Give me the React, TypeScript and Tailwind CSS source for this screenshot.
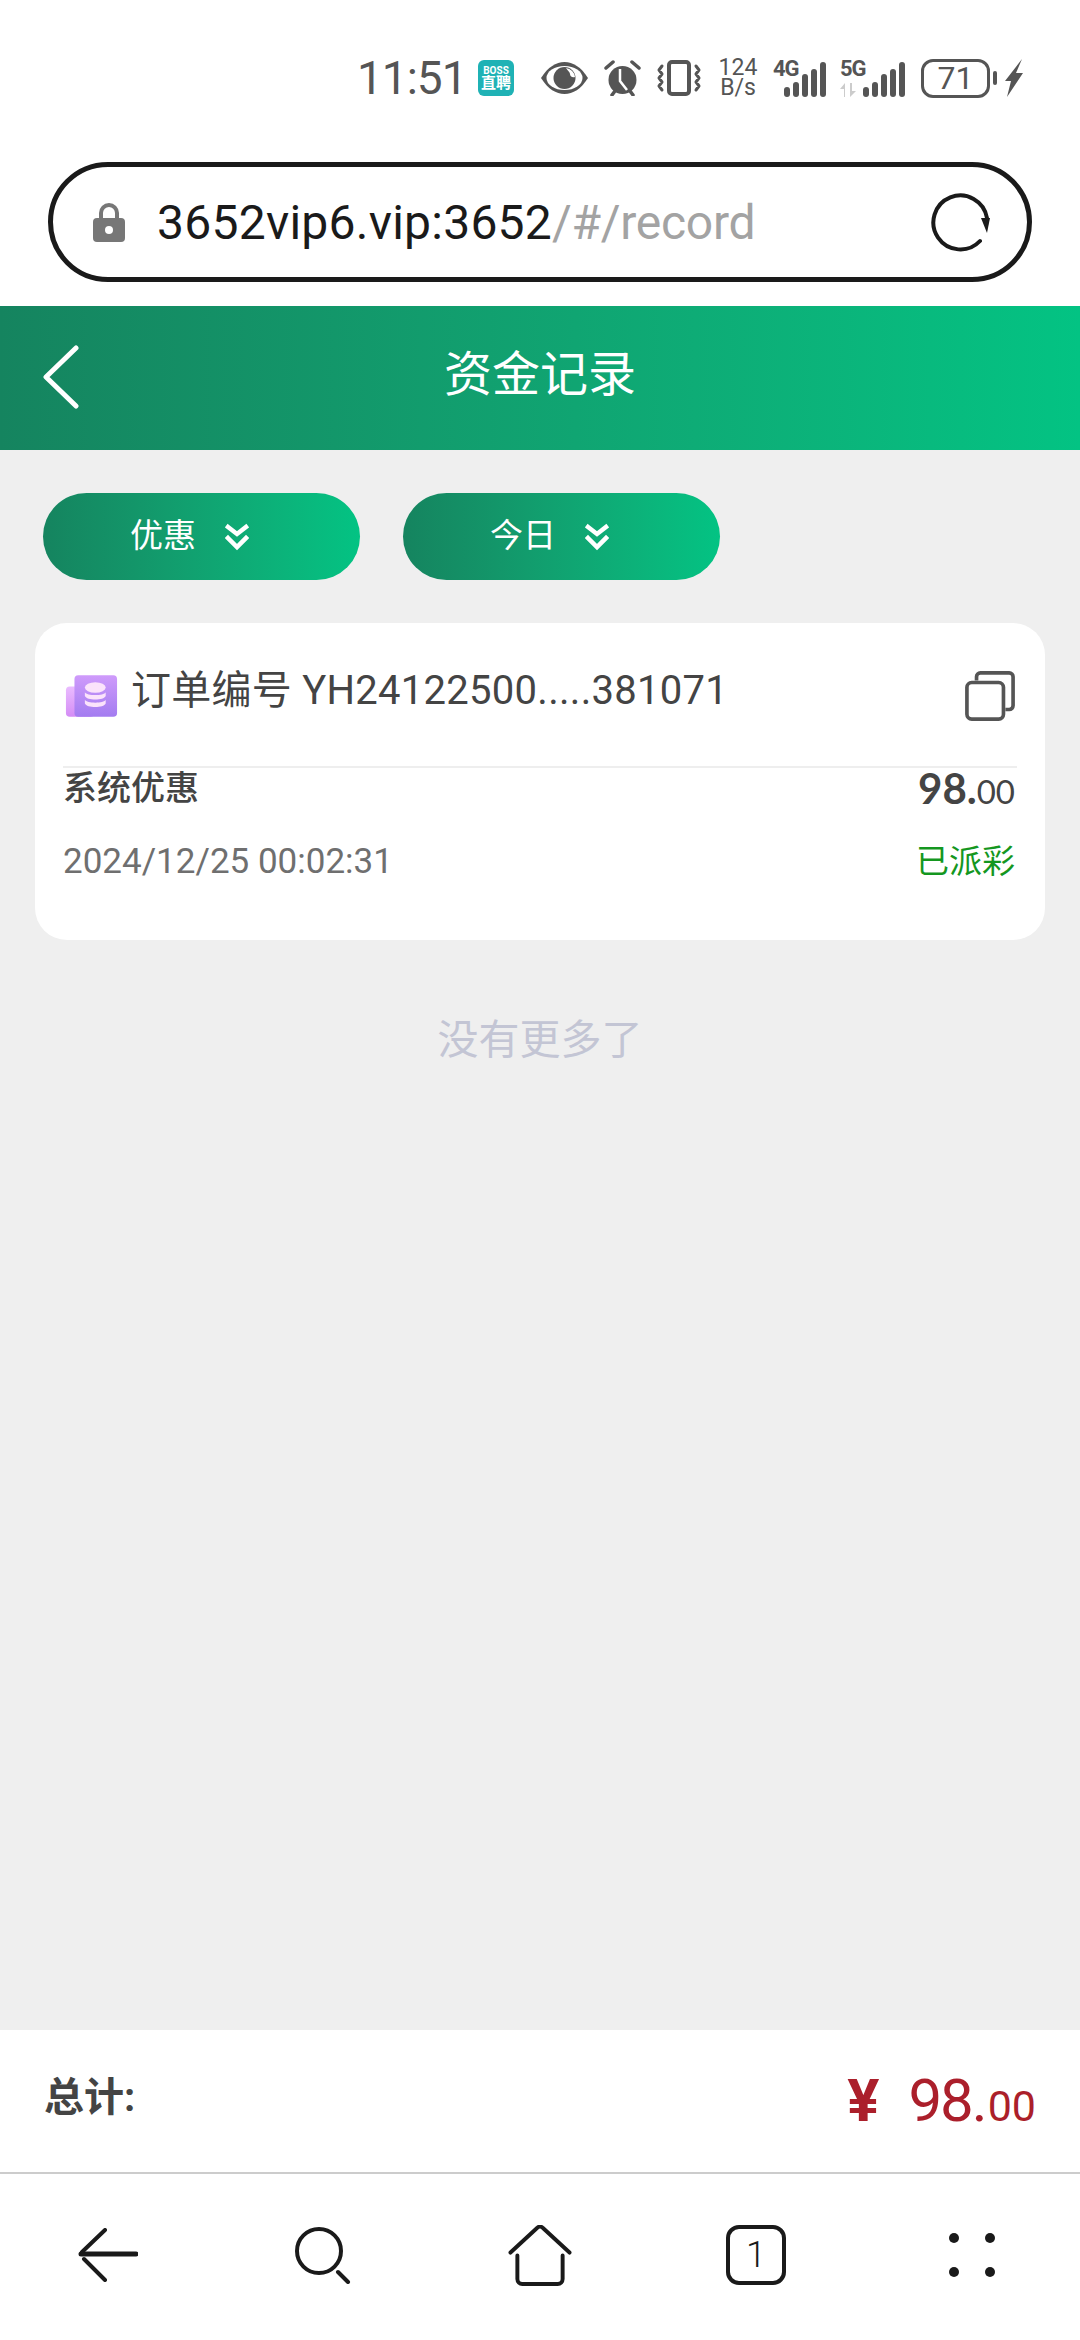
import React from 'react';

const cjk = "font-['Roboto','Noto_Sans_CJK_SC',sans-serif]";

function DoubleChevron() {
  return (
    <svg width="24" height="28" viewBox="0 0 24 28" fill="none" stroke="#fff" strokeWidth="4.500" strokeLinecap="square">
      <path d="M3 4l9 7 9-7" />
      <path d="M3 15l9 9 9-9" />
    </svg>
  );
}

function FilterPill({ label }: { label: string }) {
  return (
    <div className="w-[317px] h-[87px] rounded-full bg-gradient-to-r from-[#15845f] to-[#03c383] flex items-center pl-[87px] gap-[29px] text-white text-[33px]">
      <span className="leading-none -mt-[2px]">{label}</span>
      <DoubleChevron />
    </div>
  );
}

function Signal({ bars }: { bars: number[] }) {
  return (
    <div className="flex items-end gap-[3px]">
      {bars.map((h, i) => (
        <div key={i} className="w-[6px] rounded-full bg-[#555]" style={{ height: h }} />
      ))}
    </div>
  );
}

function StatusBar() {
  return (
    <div className="h-[162px] pt-[58px] pl-[357px] text-[#555]">
      <div className="flex items-center h-[40px]">
        <span className="w-[104px] text-[46px] leading-none font-['Roboto',sans-serif] tracking-[-1px] whitespace-nowrap">11:51</span>
        <div className="ml-[17px] w-[36px] h-[36px] rounded-[6px] bg-[#1fb2b5] flex flex-col items-center justify-center text-white leading-none">
          <span className="text-[10px] font-bold">BOSS</span>
          <span className="text-[15px] font-bold">直聘</span>
        </div>
        <svg width="47" height="32" viewBox="0 0 47 32" className="ml-[27px]">
          <path d="M0 16C7 5 15 0 23.500 0S40 5 47 16c-7 11-15 16-23.500 16S7 27 0 16z" fill="#555" />
          <ellipse cx="23.500" cy="16" rx="18" ry="12" fill="#fff" />
          <circle cx="23.500" cy="16" r="11" fill="#555" />
          <path d="M25 6a10 10 0 0 1 9 9c-3 1-5-1-5-3s-2-3-4-6z" fill="#fff" />
        </svg>
        <svg width="37" height="36" viewBox="0 0 37 36" className="ml-[16px]">
          <circle cx="18.500" cy="20" r="14" fill="#555" />
          <path d="M16 9v12l7 9" stroke="#fff" strokeWidth="2.500" fill="none" />
          <path d="M2 8l7-6M35 8l-7-6M8 35l3-4M29 35l-3-4" stroke="#555" strokeWidth="3.500" strokeLinecap="round" />
        </svg>
        <svg width="44" height="36" viewBox="0 0 44 36" fill="none" stroke="#555" strokeWidth="3" className="ml-[16px]">
          <rect x="12" y="2" width="20" height="32" rx="3" strokeWidth="4" />
          <path d="M5 6L2 10l3 4-3 4 3 4-3 4 3 4M39 6l3 4-3 4 3 4-3 4 3 4-3 4" strokeLinecap="round" strokeLinejoin="round" />
        </svg>
        <div className="ml-[18px] w-[38px] flex flex-col items-center text-[23px] leading-[20px] font-['Roboto',sans-serif]">
          <span>124</span>
          <span>B/s</span>
        </div>
        <div className="relative ml-[16px] w-[53px] h-[36px] mt-[2px]">
          <span className="absolute left-0 -top-[3px] text-[22px] font-bold leading-none tracking-[-1px] font-['Roboto',sans-serif]">4G</span>
          <div className="absolute right-0 bottom-0">
            <Signal bars={[10, 15, 23, 28, 35]} />
          </div>
        </div>
        <div className="relative ml-[14px] w-[65px] h-[36px] mt-[2px]">
          <span className="absolute left-0 -top-[3px] text-[22px] font-bold leading-none tracking-[-1px] font-['Roboto',sans-serif]">5G</span>
          <svg width="16" height="14" viewBox="0 0 16 14" fill="#ccc" className="absolute left-0 bottom-0">
            <path d="M4 14V6H0l5-6v14zM10 0h2v8h4l-6 6z" />
          </svg>
          <div className="absolute right-0 bottom-0">
            <Signal bars={[10, 15, 23, 28, 35]} />
          </div>
        </div>
        <div className="ml-[16px] w-[69px] h-[39px] rounded-[12px] border-[3px] border-[#555] flex items-center justify-center text-[32px] leading-none font-['Roboto',sans-serif]">71</div>
        <div className="w-[4px] h-[14px] bg-[#555] rounded-full ml-[3px]" />
        <svg width="18" height="38" viewBox="0 0 18 38" fill="#555" className="ml-[8px]">
          <path d="M17 0L0 22h6L2 38l16-24h-7z" />
        </svg>
      </div>
    </div>
  );
}

function AddressBar() {
  return (
    <div className="px-[48px] h-[144px]">
      <div className="h-[120px] rounded-full border-[5px] border-[#1a1a1a] flex items-center pl-[40px] pr-[36px]">
        <svg width="32" height="39" viewBox="0 0 32 39" className="shrink-0">
          <path d="M8 17v-7a8 8 0 0 1 16 0v7" fill="none" stroke="#777" strokeWidth="4" />
          <rect x="0" y="15" width="32" height="24" rx="4" fill="#777" />
          <circle cx="16" cy="27" r="4" fill="#fff" />
        </svg>
        <span className="ml-[32px] mt-[2px] text-[48px] leading-none text-[#1a1a1a] font-['Roboto',sans-serif] whitespace-nowrap tracking-[0.25px]">
          3652vip6.vip:3652<span className="text-[#a3a3a3] tracking-[-0.3px]">/#/record</span>
        </span>
        <svg width="60" height="60" viewBox="0 0 60 60" fill="none" className="ml-auto">
          <path d="M49 49A27 27 0 1 1 56 26" stroke="#1a1a1a" strokeWidth="4" strokeLinecap="round" />
          <path d="M50 26l9 0-3 15z" fill="#1a1a1a" />
        </svg>
      </div>
    </div>
  );
}

function CoinIcon() {
  return (
    <svg width="53" height="44" viewBox="0 0 56 46" className="shrink-0 mt-[10px]">
      <defs>
        <linearGradient id="back" x1="0" y1="0" x2="0" y2="1">
          <stop offset="0" stopColor="#eabcff" />
          <stop offset="1" stopColor="#d48cf5" />
        </linearGradient>
        <linearGradient id="front" x1="0" y1="0" x2="0" y2="1">
          <stop offset="0" stopColor="#cf9bfb" />
          <stop offset="1" stopColor="#a37cf0" />
        </linearGradient>
      </defs>
      <rect x="1" y="13" width="30" height="32" rx="4" fill="url(#back)" />
      <rect x="10" y="1" width="45" height="44" rx="4" fill="url(#front)" />
      <ellipse cx="32" cy="14" rx="11" ry="5.500" fill="#fbe3fb" />
      <path d="M21 19c2 4 20 4 22 0v4c-2 5-20 5-22 0z" fill="#fbe3fb" />
      <path d="M21 27c2 4 20 4 22 0v4c-2 5-20 5-22 0z" fill="#fbe3fb" />
    </svg>
  );
}

function RecordCard() {
  return (
    <div className="mx-[35px] mt-[43px] h-[317px] rounded-[32px] bg-white pl-[28px] pr-[28px]">
      <div className="h-[145px] flex items-center border-b-2 border-[#eeeeee] pb-[8px]">
        <div className="ml-[2px] flex items-center">
          <CoinIcon />
        </div>
        <span className="ml-[13px] text-[40px] leading-none text-[#444] whitespace-nowrap tracking-[0.27px]">订单编号 YH24122500.....381071</span>
        <svg width="50" height="50" viewBox="0 0 52 52" fill="none" stroke="#555" strokeWidth="3.800" className="ml-auto mt-[10px] mr-[2px]">
          <path d="M12 10V6a4 4 0 0 1 4-4h30a4 4 0 0 1 4 4v30a4 4 0 0 1-4 4h-4" strokeLinejoin="round" />
          <rect x="2" y="12" width="38" height="38" rx="5" />
        </svg>
      </div>
      <div className="flex items-center justify-between h-[40px] text-[#444] pr-[2px]">
        <span className="text-[34px] leading-none font-medium">系统优惠</span>
        <span className="leading-none">
          <span className="text-[42px] font-bold font-['Lato',sans-serif]">98.</span>
          <span className="text-[33px] font-['Lato',sans-serif]">00</span>
        </span>
      </div>
      <div className="flex items-center justify-between mt-[33px] h-[40px] pr-[2px]">
        <span className="text-[35px] leading-none text-[#6f6f6f]">2024/12/25 00:02:31</span>
        <span className="text-[33px] leading-none text-[#14971f]">已派彩</span>
      </div>
    </div>
  );
}

function TotalBar() {
  return (
    <div className="h-[144px] bg-white border-b-2 border-[#cccccc] pl-[44px] pr-[44px] flex items-center justify-between">
      <span className="text-[40px] font-bold text-[#444] -mt-[6px]">总计:</span>
      <span className="text-[#ab1f2b] leading-none flex items-baseline font-['Roboto',sans-serif]">
        <span className="text-[60px] font-bold mr-[29px]">¥</span>
        <span className="text-[60px] font-normal tracking-[-2px]">98.</span>
        <span className="text-[43px] ml-[2px]">00</span>
      </span>
    </div>
  );
}

function BrowserNav() {
  return (
    <div className="h-[166px] bg-white flex items-center pl-[78px] pb-[4px]">
      <svg width="60" height="54" viewBox="0 0 60 54" fill="none" stroke="#1a1a1a" strokeWidth="4" strokeLinecap="round">
        <path d="M3 26h55" strokeWidth="5" />
        <path d="M27 2L4 24M6 31l21 21" />
      </svg>
      <svg width="56" height="57" viewBox="0 0 56 57" fill="none" stroke="#1a1a1a" strokeWidth="4" strokeLinecap="round" className="ml-[157px]">
        <circle cx="24" cy="24" r="22" />
        <path d="M43 45l10 10" />
      </svg>
      <svg width="64" height="61" viewBox="0 0 64 62" fill="none" stroke="#1a1a1a" strokeWidth="4" strokeLinecap="round" strokeLinejoin="round" className="ml-[157px]">
        <path d="M2 28L29 3a4 4 0 0 1 6 0l27 25" />
        <path d="M9 31v24a5 5 0 0 0 5 5h36a5 5 0 0 0 5-5V31" />
      </svg>
      <div className="ml-[154px] w-[60px] h-[60px] rounded-[13px] border-4 border-[#1a1a1a] flex items-center justify-center text-[36px] leading-none font-['Roboto',sans-serif] font-light text-[#1a1a1a]">1</div>
      <div className="ml-[163px] w-[46px] h-[44px] grid grid-cols-2 content-between">
        <div className="w-[10px] h-[10px] rounded-full bg-[#1a1a1a]" />
        <div className="w-[10px] h-[10px] rounded-full bg-[#1a1a1a] justify-self-end" />
        <div className="w-[10px] h-[10px] rounded-full bg-[#1a1a1a]" />
        <div className="w-[10px] h-[10px] rounded-full bg-[#1a1a1a] justify-self-end" />
      </div>
    </div>
  );
}

export default function App() {
  return (
    <div className={`w-[1080px] h-[2340px] bg-[#efefef] flex flex-col overflow-hidden ${cjk}`}>
      <div className="bg-white h-[306px] shrink-0">
        <StatusBar />
        <AddressBar />
      </div>
      <div className="relative h-[144px] shrink-0 bg-gradient-to-r from-[#15845f] to-[#03c383] flex items-center justify-center">
        <svg width="40" height="66" viewBox="0 0 40 66" fill="none" stroke="#fff" strokeWidth="5" strokeLinecap="round" strokeLinejoin="round" className="absolute left-[41px] top-[39px]">
          <path d="M35 3L5 32l30 29" />
        </svg>
        <span className="text-white text-[48px] leading-none -mt-[6px]">资金记录</span>
      </div>
      <div className="flex gap-[43px] pl-[43px] mt-[43px] shrink-0">
        <FilterPill label="优惠" />
        <FilterPill label="今日" />
      </div>
      <RecordCard />
      <div className="mt-[80px] text-center text-[41px] leading-none text-[#c3c5d4]">没有更多了</div>
      <div className="mt-auto shrink-0">
        <TotalBar />
        <BrowserNav />
      </div>
    </div>
  );
}
